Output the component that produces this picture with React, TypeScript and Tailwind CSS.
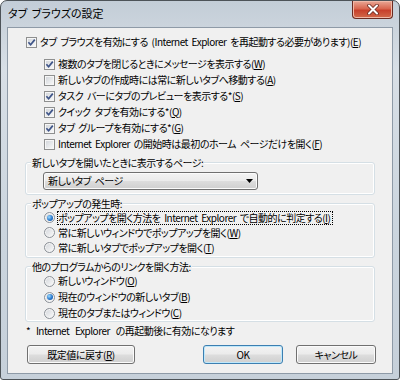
import React from "react";

function Key({ k }: { k: string }) {
  return (
    <>
      (<u className="underline underline-offset-[1px]">{k}</u>)
    </>
  );
}

function Check({ checked }: { checked: boolean }) {
  return (
    <span className="flex h-[11px] w-[11px] flex-shrink-0 items-center justify-center border border-[#8e8f8f] bg-[linear-gradient(135deg,#cfd3d8,#fbfbfb)] shadow-[inset_0_0_0_1px_#f6f6f6]">
      {checked && (
        <svg width="9" height="9" viewBox="0 0 9 9">
          <path d="M1.4 4.3 L3.6 6.8 L7.8 1.6" fill="none" stroke="#3e5488" strokeWidth="1.7" />
        </svg>
      )}
    </span>
  );
}

function Radio({ on }: { on: boolean }) {
  return (
    <span className="flex h-[11px] w-[11px] flex-shrink-0 items-center justify-center rounded-full border border-[#8b9097] bg-[linear-gradient(135deg,#d2d5da,#fbfbfb)] shadow-[inset_0_0_0_1px_#f7f7f7]">
      {on && (
        <span className="h-[6px] w-[6px] rounded-full bg-[radial-gradient(circle_at_35%_35%,#9edcff,#2a78cc_55%,#0d4d98)]" />
      )}
    </span>
  );
}

function CheckRow({ checked, children, sub }: { checked: boolean; children: React.ReactNode; sub?: boolean }) {
  return (
    <div className={sub ? "ml-[19px] flex h-[16px] items-center gap-[3px]" : "ml-[1px] flex h-[16px] items-center gap-[3px]"}>
      <Check checked={checked} />
      <span className="whitespace-nowrap leading-[16px]">{children}</span>
    </div>
  );
}

function RadioRow({ on, focus, children, tall }: { on: boolean; focus?: boolean; children: React.ReactNode; tall?: boolean }) {
  return (
    <div className={tall ? "ml-[13px] flex h-[16px] items-center gap-[2px]" : "ml-[13px] flex h-[15px] items-center gap-[2px]"}>
      <Radio on={on} />
      <span
        className={
          focus
            ? "whitespace-nowrap border border-dotted border-black pr-[2px] leading-[12px]"
            : "whitespace-nowrap border border-transparent leading-[12px]"
        }
      >
        {children}
      </span>
    </div>
  );
}

function Group({ label, children, className }: { label: string; children: React.ReactNode; className: string }) {
  return (
    <fieldset
      className={
        "rounded-[3px] border border-[#d5dfe5] pl-[5px] shadow-[inset_0_0_0_1px_#ffffff] " + className
      }
    >
      <legend className="bg-[#f0f0f0] px-[1px] leading-[13px]">{label}</legend>
      {children}
    </fieldset>
  );
}

function Button({ children, primary, className }: { children: React.ReactNode; primary?: boolean; className: string }) {
  return (
    <div
      className={
        (primary
          ? "border-[#3c7fb1] shadow-[inset_0_0_0_1px_#bfe8fb] "
          : "border-[#707070] shadow-[inset_0_0_0_1px_#fbfbfb] ") +
        "flex h-[19px] items-center justify-center rounded-[3px] border bg-[linear-gradient(180deg,#f3f3f3_0%,#ebebeb_48%,#dddddd_52%,#cfcfcf_100%)] leading-[16px] " +
        className
      }
    >
      {children}
    </div>
  );
}

export default function App() {
  return (
    <div className="h-[380px] w-[400px] bg-white font-['Noto_Sans_CJK_JP','Noto_Sans',sans-serif] text-[10px] font-normal tracking-[-0.5px] text-black [font-feature-settings:'palt'] [word-spacing:2px]">
      <div className="flex h-full flex-col rounded-t-[7px] rounded-b-[3px] border border-[#4d5358] bg-[linear-gradient(180deg,#c3cdd7_0%,#d8dfe6_18%,#cbd5de_60%,#c6d0da_100%)] px-[6px] pb-[5px]">
        {/* title bar */}
        <div className="flex h-[26px] items-start justify-between">
          <span className="ml-[1px] mt-[4px] text-[11px] leading-[17px] tracking-normal text-black">タブ ブラウズの設定</span>
          <div className="flex h-[18px] w-[41px] items-center justify-center rounded-b-[4px] border border-t-0 border-[#6b2b22] bg-[linear-gradient(180deg,#e9a896_0%,#d8664f_45%,#c7402b_55%,#d2694a_100%)] shadow-[inset_0_0_0_1px_#f0b9a8]">
            <svg width="12" height="11" viewBox="0 0 12 11">
              <path d="M2 1.5 L10 9.5 M10 1.5 L2 9.5" stroke="#6a2b22" strokeWidth="3.6" strokeLinecap="round" />
              <path d="M2 1.5 L10 9.5 M10 1.5 L2 9.5" stroke="#ffffff" strokeWidth="2" strokeLinecap="round" />
            </svg>
          </div>
        </div>

        {/* client area */}
        <div className="flex flex-1 flex-col border border-[#8e9aa7] bg-[#f0f0f0] px-[17px] pt-[6px]">
          <CheckRow checked>
            タブ ブラウズを有効にする (Internet Explorer を再起動する必要があります)<Key k="E" />
          </CheckRow>
          <div className="mt-[6px] flex flex-col">
            <CheckRow sub checked>
              複数のタブを閉じるときにメッセージを表示する<Key k="W" />
            </CheckRow>
            <CheckRow sub checked={false}>
              新しいタブの作成時には常に新しいタブへ移動する<Key k="A" />
            </CheckRow>
            <CheckRow sub checked>
              タスク バーにタブのプレビューを表示する*<Key k="S" />
            </CheckRow>
            <CheckRow sub checked>
              クイック タブを有効にする*<Key k="Q" />
            </CheckRow>
            <CheckRow sub checked>
              タブ グループを有効にする*<Key k="G" />
            </CheckRow>
            <CheckRow sub checked={false}>
              Internet Explorer の開始時は最初のホーム ページだけを開く<Key k="F" />
            </CheckRow>
          </div>

          <Group label="新しいタブを開いたときに表示するページ:" className="mt-[4px] pb-[4px]">
            <div className="ml-[12px] mt-[3px] flex h-[18px] w-[215px] items-center justify-between rounded-[3px] border border-[#707070] bg-[linear-gradient(180deg,#f3f3f3_0%,#ebebeb_48%,#dddddd_52%,#cfcfcf_100%)] pl-[4px] pr-[4px] shadow-[inset_0_0_0_1px_#fbfbfb]">
              <span className="leading-[16px]">新しいタブ ページ</span>
              <svg width="7" height="4" viewBox="0 0 7 4">
                <path d="M0 0 H7 L3.5 4 Z" fill="#000" />
              </svg>
            </div>
          </Group>

          <Group label="ポップアップの発生時:" className="mt-[2px] pb-[2px]">
            <RadioRow on focus>
              ポップアップを開く方法を Internet Explorer で自動的に判定する<Key k="I" />
            </RadioRow>
            <RadioRow on={false}>
              常に新しいウィンドウでポップアップを開く<Key k="W" />
            </RadioRow>
            <RadioRow on={false}>
              常に新しいタブでポップアップを開く<Key k="T" />
            </RadioRow>
          </Group>

          <Group label="他のプログラムからのリンクを開く方法:" className="mt-[2px] pb-0">
            <RadioRow tall on={false}>
              新しいウィンドウ<Key k="O" />
            </RadioRow>
            <RadioRow tall on>
              現在のウィンドウの新しいタブ<Key k="B" />
            </RadioRow>
            <RadioRow tall on={false}>
              現在のタブまたはウィンドウ<Key k="C" />
            </RadioRow>
          </Group>

          <div className="ml-[1px] mt-[1px] h-[16px] whitespace-nowrap leading-[16px] [word-spacing:4px]">
            * Internet Explorer の再起動後に有効になります
          </div>

          <div className="-mr-[1px] mt-[6px] flex items-center">
            <Button className="ml-[2px] w-[108px]">
              既定値に戻す<Key k="R" />
            </Button>
            <div className="flex-1" />
            <Button primary className="w-[80px]">
              OK
            </Button>
            <Button className="ml-[13px] w-[80px]">キャンセル</Button>
          </div>
        </div>
      </div>
    </div>
  );
}
